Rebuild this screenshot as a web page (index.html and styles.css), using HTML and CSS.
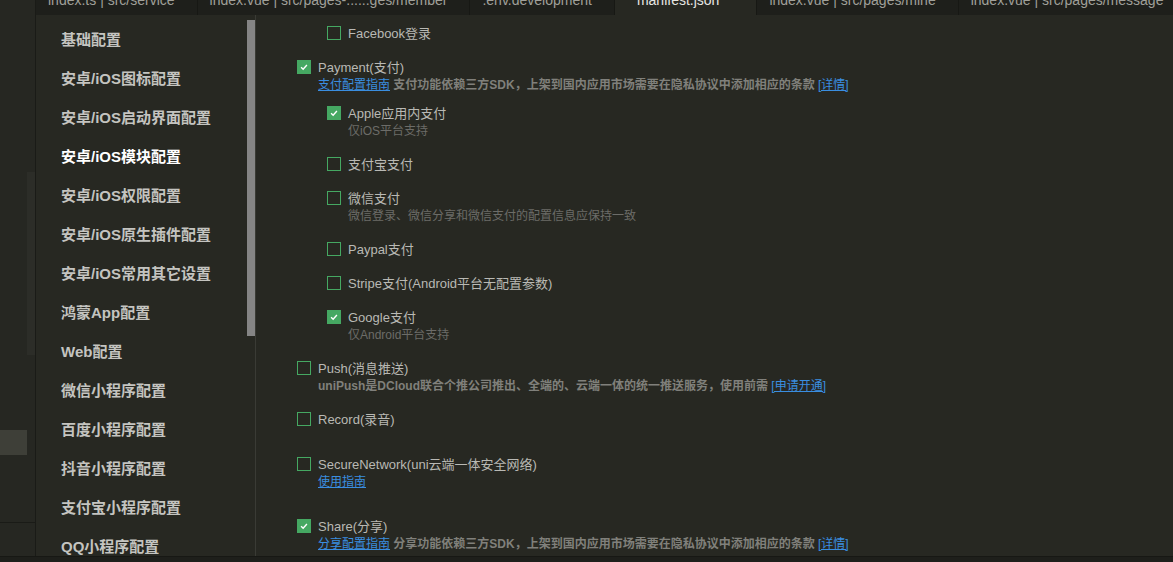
FILE: index.html
```html
<!doctype html>
<html lang="zh-CN">
<head>
    <meta charset="UTF-8">
    <title>manifest.json</title>
    <link rel="stylesheet" href="styles.css">
</head>
<body>
<div class="window">
    <div class="workbench">
        <div class="dock">
            <div class="dock-track"></div>
            <div class="dock-item"></div>
            <div class="dock-rule"></div>
        </div>
        <div class="editor">
            <div class="tabs">
                <div class="tab">index.ts | src/service</div>
                <div class="tab">index.vue | src/pages-......ges/member</div>
                <div class="tab">.env.development</div>
                <div class="tab active">manifest.json</div>
                <div class="tab">index.vue | src/pages/mine</div>
                <div class="tab">index.vue | src/pages/message</div>
            </div>
            <div class="panes">
                <div class="menu">
                    <ul class="menu-list">
                        <li>基础配置</li>
                        <li>安卓/iOS图标配置</li>
                        <li>安卓/iOS启动界面配置</li>
                        <li class="current">安卓/iOS模块配置</li>
                        <li>安卓/iOS权限配置</li>
                        <li>安卓/iOS原生插件配置</li>
                        <li>安卓/iOS常用其它设置</li>
                        <li>鸿蒙App配置</li>
                        <li>Web配置</li>
                        <li>微信小程序配置</li>
                        <li>百度小程序配置</li>
                        <li>抖音小程序配置</li>
                        <li>支付宝小程序配置</li>
                        <li>QQ小程序配置</li>
                    </ul>
                    <div class="menu-scroll"><div class="menu-thumb"></div></div>
                </div>

                <div class="modules">
                    <div class="opt-children top">
                        <div class="opt">
                            <div class="opt-row"><span class="box"></span><span>Facebook登录</span></div>
                        </div>
                    </div>

                    <div class="opt">
                        <div class="opt-row">
                            <span class="box on"><svg viewBox="0 0 14 14"><path d="M3.6 7.3 6 9.6 10.4 4.6"/></svg></span>
                            <span>Payment(支付)</span>
                        </div>
                        <div class="opt-desc note"><a href="#">支付配置指南</a> 支付功能依赖三方SDK，上架到国内应用市场需要在隐私协议中添加相应的条款 <a href="#">[详情]</a></div>
                        <div class="opt-children">
                            <div class="opt">
                                <div class="opt-row">
                                    <span class="box on"><svg viewBox="0 0 14 14"><path d="M3.6 7.3 6 9.6 10.4 4.6"/></svg></span>
                                    <span>Apple应用内支付</span>
                                </div>
                                <div class="opt-desc">仅iOS平台支持</div>
                            </div>
                            <div class="opt">
                                <div class="opt-row"><span class="box"></span><span>支付宝支付</span></div>
                            </div>
                            <div class="opt">
                                <div class="opt-row"><span class="box"></span><span>微信支付</span></div>
                                <div class="opt-desc">微信登录、微信分享和微信支付的配置信息应保持一致</div>
                            </div>
                            <div class="opt">
                                <div class="opt-row"><span class="box"></span><span>Paypal支付</span></div>
                            </div>
                            <div class="opt">
                                <div class="opt-row"><span class="box"></span><span>Stripe支付(Android平台无配置参数)</span></div>
                            </div>
                            <div class="opt">
                                <div class="opt-row">
                                    <span class="box on"><svg viewBox="0 0 14 14"><path d="M3.6 7.3 6 9.6 10.4 4.6"/></svg></span>
                                    <span>Google支付</span>
                                </div>
                                <div class="opt-desc">仅Android平台支持</div>
                            </div>
                        </div>
                    </div>

                    <div class="opt">
                        <div class="opt-row"><span class="box"></span><span>Push(消息推送)</span></div>
                        <div class="opt-desc note">uniPush是DCloud联合个推公司推出、全端的、云端一体的统一推送服务，使用前需 <a href="#">[申请开通]</a></div>
                    </div>

                    <div class="opt">
                        <div class="opt-row"><span class="box"></span><span>Record(录音)</span></div>
                    </div>

                    <div class="opt spaced">
                        <div class="opt-row"><span class="box"></span><span>SecureNetwork(uni云端一体安全网络)</span></div>
                        <div class="opt-desc"><a href="#">使用指南</a></div>
                    </div>

                    <div class="opt spaced">
                        <div class="opt-row">
                            <span class="box on"><svg viewBox="0 0 14 14"><path d="M3.6 7.3 6 9.6 10.4 4.6"/></svg></span>
                            <span>Share(分享)</span>
                        </div>
                        <div class="opt-desc note"><a href="#">分享配置指南</a> 分享功能依赖三方SDK，上架到国内应用市场需要在隐私协议中添加相应的条款 <a href="#">[详情]</a></div>
                    </div>
                </div>
            </div>
        </div>
    </div>
    <div class="statusbar"></div>
</div>
</body>
</html>
```

FILE: styles.css
```css
*, *::after, *::before {
    box-sizing: border-box;
    margin: 0;
    padding: 0;
}

:root {
    --bg: #272822;
    --bg-dark: #1e1f1b;
    --green: #45a862;
    --link: #3a8ee0;
}

body {
    margin: 0;
    background-color: var(--bg);
    font-family: "Liberation Sans", "Noto Sans CJK SC", sans-serif;
    overflow: hidden;
}

.window {
    width: 100vw;
    height: 100vh;
    display: flex;
    flex-direction: column;
}

.workbench {
    flex: 1;
    display: flex;
    min-height: 0;
}

/* left dock */
.dock {
    width: 36px;
    flex: none;
    background-color: #262722;
    border-right: 1px solid #1a1b17;
    display: flex;
    flex-direction: column;
}

.dock-track {
    margin: 172px 0 0 27px;
    width: 8px;
    height: 183px;
    background-color: #2c2d28;
}

.dock-item {
    margin-top: 75px;
    width: 27px;
    height: 25px;
    background-color: #3e3f38;
}

.dock-rule {
    margin-top: 67px;
    height: 1px;
    background-color: #1a1b17;
}

/* editor */
.editor {
    flex: 1;
    display: flex;
    flex-direction: column;
    min-width: 0;
}

.tabs {
    height: 15px;
    flex: none;
    display: flex;
    overflow: hidden;
    background-color: var(--bg-dark);
}

.tab {
    height: 22px;
    margin-top: -7px;
    line-height: 15px;
    padding: 0 22px 0 12px;
    font-size: 14px;
    color: #a0a09a;
    white-space: nowrap;
    border-right: 1px solid #171814;
}

.tab.active {
    background-color: var(--bg);
    color: #e6e6e2;
    padding: 0 37px 0 22px;
}

.panes {
    flex: 1;
    display: flex;
    min-height: 0;
}

/* settings menu */
.menu {
    width: 220px;
    flex: none;
    display: flex;
    border-right: 1px solid #3a3b35;
    overflow: hidden;
}

.menu-list {
    flex: 1;
    list-style: none;
    padding: 5px 0 0 25px;
}

.menu-list li {
    height: 39px;
    line-height: 39px;
    font-size: 15px;
    font-weight: bold;
    color: #c4c4c0;
    white-space: nowrap;
}

.menu-list li.current {
    color: #ffffff;
}

.menu-scroll {
    width: 8px;
    flex: none;
}

.menu-thumb {
    margin-top: 5px;
    height: 316px;
    background-color: #858585;
}

/* module options */
.modules {
    flex: 1;
    padding: 9px 0 0 41px;
    overflow: hidden;
}

.opt + .opt {
    margin-top: 17px;
}

.opt.spaced {
    margin-top: 28px;
}

.opt-row {
    display: flex;
    align-items: center;
    gap: 7px;
    height: 17px;
    font-size: 13px;
    color: #b9b9b4;
    white-space: nowrap;
}

.box {
    width: 14px;
    height: 14px;
    flex: none;
    border: 1px solid var(--green);
    display: flex;
}

.box.on {
    background-color: var(--green);
}

.box svg {
    width: 12px;
    height: 12px;
    fill: none;
    stroke: #ffffff;
    stroke-width: 1.6;
}

.opt-desc {
    padding-left: 21px;
    height: 17px;
    line-height: 17px;
    margin: 2px 0 -2px;
    font-size: 12px;
    color: #6c6c68;
    white-space: nowrap;
}

.opt-desc.note {
    font-weight: bold;
    color: #80807b;
}

.opt-desc a {
    color: var(--link);
    font-weight: normal;
}

.opt-children {
    padding-left: 30px;
    margin-top: 12px;
}

.opt-children.top {
    margin-top: 0;
    margin-bottom: 17px;
}

.statusbar {
    height: 6px;
    flex: none;
    border-top: 1px solid #171814;
    background-color: #1e1f1b;
}
```
